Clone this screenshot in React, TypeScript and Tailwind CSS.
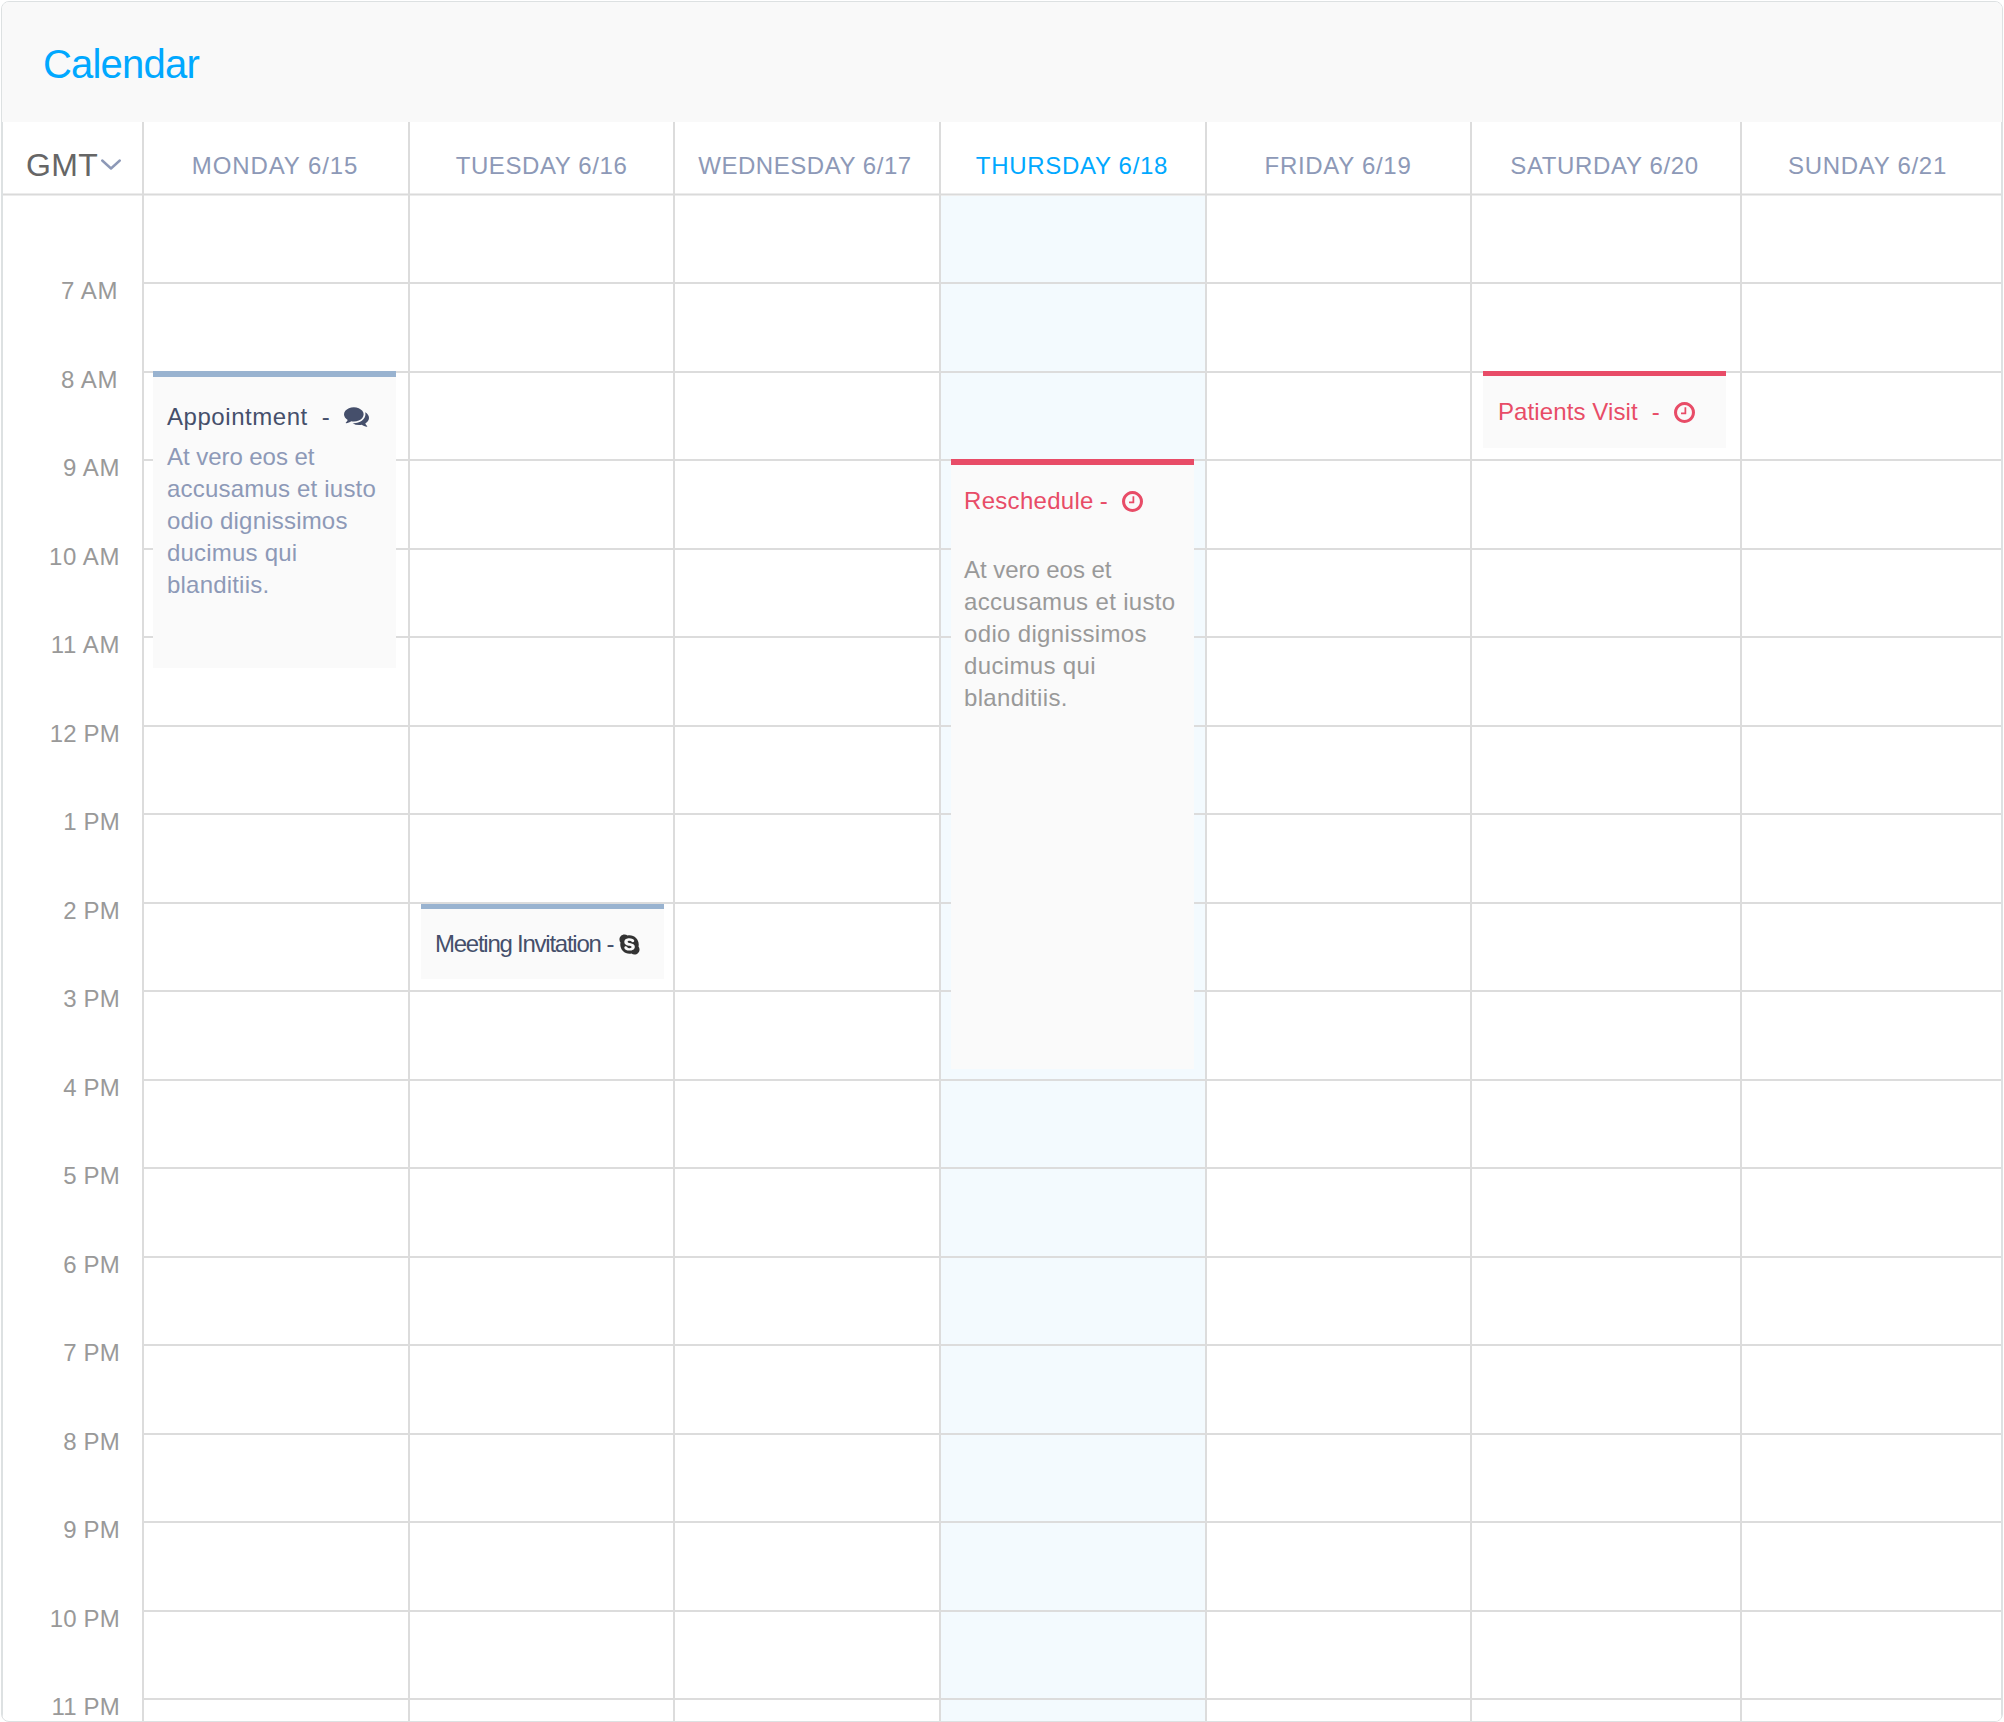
import type { ReactNode } from "react";
import { FaSkype } from "react-icons/fa";

const HOURS = [
  "7 AM", "8 AM", "9 AM", "10 AM", "11 AM", "12 PM", "1 PM", "2 PM", "3 PM",
  "4 PM", "5 PM", "6 PM", "7 PM", "8 PM", "9 PM", "10 PM", "11 PM",
];

function ClockIcon({ className }: { className: string }) {
  return (
    <svg viewBox="0 128 1536 1536" className={className} fill="currentColor">
      <path d="M896 544v448q0 14-9 23t-23 9H544q-14 0-23-9t-9-23v-64q0-14 9-23t23-9h224V544q0-14 9-23t23-9h64q14 0 23 9t9 23zm416 352q0-148-73-273t-198-198-273-73-273 73-198 198-73 273 73 273 198 198 273 73 273-73 198-198 73-273zm224 0q0 209-103 385.500t-279.500 279.500-385.500 103-385.500-103T103 1281.500 0 896t103-385.500T382.500 231 768 128t385.500 103T1433 510.500 1536 896z" />
    </svg>
  );
}

function CommentsIcon({ className }: { className: string }) {
  return (
    <svg viewBox="0 256 1792 1408" className={className} fill="currentColor">
      <path d="M1408 768q0 139-94 257t-256.500 186.500-353.500 68.500q-86 0-176-16-124 88-278 128-36 9-86 16h-3q-11 0-20.500-8t-11.500-21q-1-3-1-6.500t.5-6.500 2-6l2.500-5 3.500-5.500 4-5 4.500-5 4-4.500q5-6 23-25t26-29.500 22.500-29 25-38.500 20.500-44q-124-72-195-177T0 768q0-139 94-257t256.500-186.500T704 256t353.500 68.500T1314 511t94 257zm384 256q0 120-71 224.500t-195 176.500q10 24 20.500 44t25 38.500 22.500 29 26 29.500 23 25q1 1 4 4.500t4.500 5 4 5 3.500 5.500l2.500 5 2 6 .5 6.500-1 6.500q-3 14-13 22t-22 7q-50-7-86-16-154-40-278-128-90 16-176 16-271 0-472-132 58 4 88 4 161 0 309-45t264-129q125-92 192-212t67-254q0-77-23-152 129 71 204 178t75 230z" />
    </svg>
  );
}

function Body({ className }: { className: string }) {
  return (
    <p className={`leading-[32px] whitespace-nowrap ${className}`}>
      <span className="tracking-[-0.05px]">At vero eos et</span>
      <br />
      accusamus et iusto
      <br />
      odio dignissimos
      <br />
      ducimus qui
      <br />
      blanditiis.
    </p>
  );
}

function Event({ className, children }: { className: string; children: ReactNode }) {
  return (
    <article className={`absolute w-[243px] bg-[#fafafa] ${className}`}>
      {children}
    </article>
  );
}

const DAYS: {
  label: string;
  width: string;
  head: string;
  today?: boolean;
  event?: ReactNode;
}[] = [
  {
    label: "MONDAY 6/15",
    width: "w-[266px]",
    head: "pr-[2px] tracking-[0.9px]",
    event: (
      <Event className="left-[9px] top-[176px] h-[297px] border-t-[6px] border-[#99b3d0] pt-[26px] pl-[14px]">
        <h3 className="flex items-center text-[#454f6b] leading-[28px] whitespace-nowrap">
          <span className="tracking-[0.55px]">Appointment</span>
          <span className="ml-[14px]">-</span>
          <CommentsIcon className="ml-[14px] h-[20px] w-[25px]" />
        </h3>
        <Body className="mt-[10px] text-[#8d99b7] tracking-[0.2px]" />
      </Event>
    ),
  },
  {
    label: "TUESDAY 6/16",
    width: "w-[265px]",
    head: "tracking-[0.6px]",
    event: (
      <Event className="left-[11px] top-[709px] h-[75px] border-t-[5px] border-[#99b3d0] pt-[21px] pl-[14px]">
        <h3 className="flex items-center text-[#454f6b] leading-[28px] whitespace-nowrap">
          <span className="tracking-[-1.25px]">Meeting Invitation</span>
          <span className="ml-[6px]">-</span>
          <FaSkype className="ml-[3px] size-[23px] text-[#333333]" />
        </h3>
      </Event>
    ),
  },
  { label: "WEDNESDAY 6/17", width: "w-[266px]", head: "pr-[4px] tracking-[0.55px]" },
  {
    label: "THURSDAY 6/18",
    width: "w-[266px]",
    head: "pr-[2px] tracking-[0.7px]",
    today: true,
    event: (
      <Event className="left-[10px] top-[264px] h-[610px] border-t-[6px] border-[#e84c67] pt-[22px] pl-[13px]">
        <h3 className="flex items-center text-[#e84c67] leading-[28px] whitespace-nowrap">
          <span className="tracking-[0.3px]">Reschedule</span>
          <span className="ml-[6px]">-</span>
          <ClockIcon className="ml-[14px] size-[21px]" />
        </h3>
        <Body className="mt-[39px] text-[#999999] tracking-[0.34px]" />
      </Event>
    ),
  },
  { label: "FRIDAY 6/19", width: "w-[265px]", head: "pr-[1px] tracking-[0.7px]" },
  {
    label: "SATURDAY 6/20",
    width: "w-[270px]",
    head: "pr-[3px] tracking-[0.65px]",
    event: (
      <Event className="left-[11px] top-[176px] h-[77px] border-t-[5px] border-[#e84c67] pt-[22px] pl-[15px]">
        <h3 className="flex items-center text-[#e84c67] leading-[28px] whitespace-nowrap">
          <span className="tracking-[0.1px]">Patients Visit</span>
          <span className="ml-[14px]">-</span>
          <ClockIcon className="ml-[14px] size-[21px]" />
        </h3>
      </Event>
    ),
  },
  { label: "SUNDAY 6/21", width: "flex-1", head: "pr-[8px] tracking-[0.7px]" },
];

export default function App() {
  return (
    <div className="h-[1722px] w-[2004px] overflow-hidden bg-white px-px pt-px font-['Liberation_Sans',Arial,sans-serif] text-[24px]">
      <main className="flex h-[1721px] flex-col overflow-hidden rounded-[8px] border border-[#dde1e2]">
        <header className="flex h-[120px] shrink-0 items-center bg-[#f9f9f9] pt-[4px] pl-[41px]">
          <h1 className="text-[40px] leading-[46px] tracking-[-0.8px] text-[#00a8ff]">Calendar</h1>
        </header>

        <div className="flex flex-1 overflow-hidden border-x border-[#dde1e2]">
          <aside className="w-[139px] shrink-0">
            <div className="flex h-[73px] items-center border-b border-[#dadada] pl-[23px] pt-[13px] text-[#666666] shadow-[inset_0_-1px_0_#ececec,0_1px_0_#ececec]">
              <button className="flex items-center text-[32px] leading-[36px] tracking-[0.3px]">
                GMT
                <svg viewBox="0 0 20 12" className="ml-[3px] h-[12px] w-[20px]" fill="none">
                  <path d="M1.200 1.500 10 9.500 18.800 1.500" stroke="#8d99b7" strokeWidth="2.400" strokeLinecap="round" strokeLinejoin="round" />
                </svg>
              </button>
            </div>
            <ul className="pt-[82px] text-right text-[#999999]">
              {HOURS.map((hour, i) => (
                <li
                  key={hour}
                  className={`h-[88.5px] leading-[28px] ${i < 2 ? "pr-[24px]" : "pr-[22px]"} ${
                    hour.endsWith("AM") ? "tracking-[0.6px]" : "tracking-[0.2px]"
                  }`}
                >
                  {hour}
                </li>
              ))}
            </ul>
          </aside>

          {DAYS.map((day) => (
            <section key={day.label} className={`shrink-0 border-l-2 border-[#dcdcdc] ${day.width}`}>
              <h2
                className={`relative z-10 flex h-[73px] items-center justify-center border-b border-[#dadada] pt-[15px] leading-[28px] whitespace-nowrap shadow-[inset_0_-1px_0_#ececec,0_1px_0_#ececec] ${day.head} ${
                  day.today ? "text-[#00a8ff]" : "text-[#8d99b7]"
                }`}
              >
                {day.label}
              </h2>
              <div className={`relative h-[1527px] ${day.today ? "bg-[#f3fafe]" : "bg-white"}`}>
                <div className="h-[89px] border-b-2 border-[#dcdcdc]" />
                {HOURS.slice(1).map((hour) => (
                  <div key={hour} className="h-[88.5px] border-b-2 border-[#dcdcdc]" />
                ))}
                {day.event}
              </div>
            </section>
          ))}
        </div>
      </main>
    </div>
  );
}
